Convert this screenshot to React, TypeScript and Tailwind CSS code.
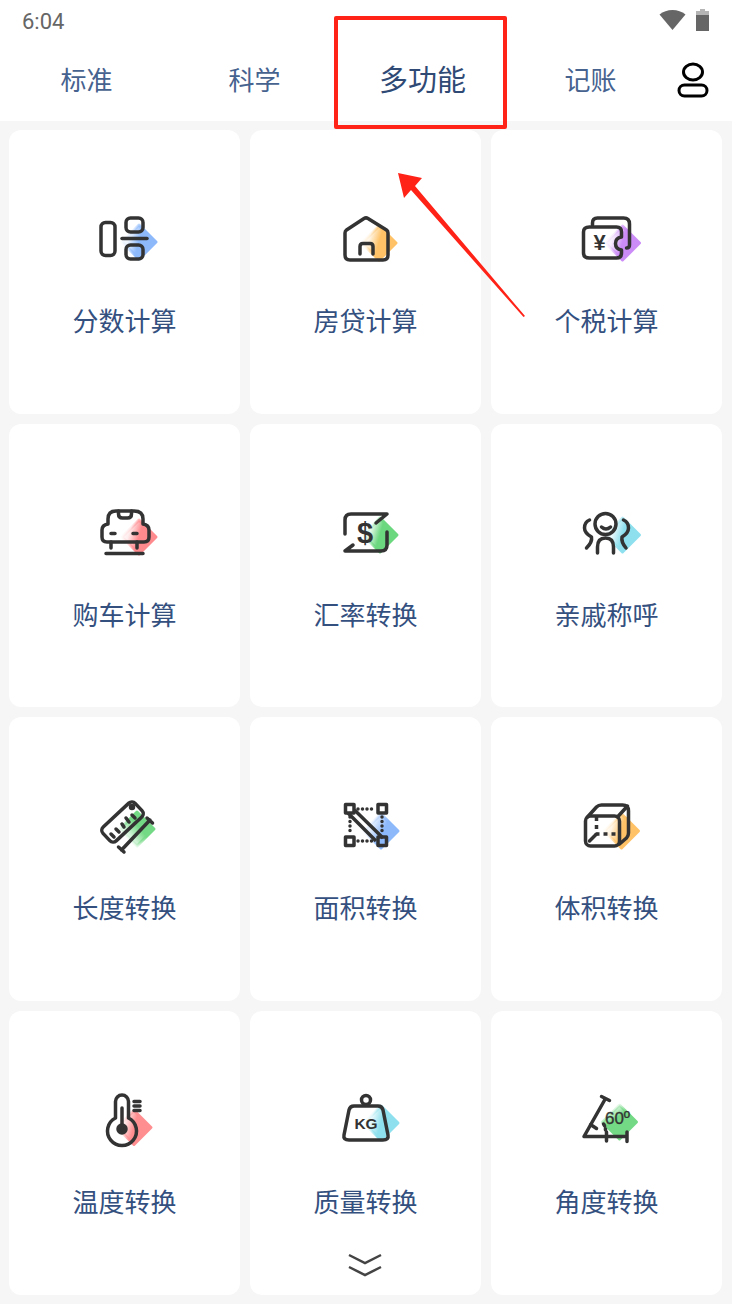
import { useId, type ReactNode } from 'react'

const INK = '#333333'

// colour fades in from the left side of the diamond, behind the line drawing
function Diamond({ cx, cy, color, from, to }: { cx: number; cy: number; color: string; from?: [number, number]; to?: [number, number] }) {
  const id = useId()
  const r = 17
  const start = from ?? [cx - 18, cy - 6]
  const end = to ?? [cx + 2, cy]
  return (
    <>
      <defs>
        <linearGradient id={id} gradientUnits="userSpaceOnUse" x1={start[0]} y1={start[1]} x2={end[0]} y2={end[1]}>
          <stop offset="0" stopColor={color} stopOpacity="0" />
          <stop offset="0.4" stopColor={color} stopOpacity="0.15" />
          <stop offset="0.9" stopColor={color} />
        </linearGradient>
      </defs>
      <polygon
        points={`${cx},${cy - r} ${cx + r},${cy} ${cx},${cy + r} ${cx - r},${cy}`}
        fill={`url(#${id})`}
        stroke={`url(#${id})`}
        strokeWidth="3"
        strokeLinejoin="round"
      />
    </>
  )
}

function Glyph({ dx = 5, dy = 0, children }: { dx?: number; dy?: number; children: ReactNode }) {
  return (
    <svg width="100" height="80" viewBox="0 0 100 80" className="block shrink-0">
      <g transform={`translate(${dx} ${dy})`} fill="none" stroke={INK} strokeWidth="3.5" strokeLinecap="round" strokeLinejoin="round">
        {children}
      </g>
    </svg>
  )
}

function IconText({ x, y, size, light = false, children }: { x: number; y: number; size: number; light?: boolean; children: ReactNode }) {
  return (
    <text
      x={x}
      y={y}
      fontSize={size}
      textAnchor="middle"
      fill={INK}
      stroke={light ? INK : 'none'}
      strokeWidth={light ? 0.3 : 0}
      className={light ? "font-['Liberation_Sans',sans-serif] font-normal" : "font-['Liberation_Sans',sans-serif] font-bold"}
    >
      {children}
    </text>
  )
}

const items = [
  {
    label: '分数计算',
    icon: (
      <Glyph>
        <Diamond cx={59} cy={42} color="#8db9fb" />
        <rect x="21" y="22.5" width="14" height="33" rx="4.5" />
        <rect x="46" y="18" width="17" height="14" rx="4.5" />
        <rect x="46" y="45" width="17" height="14" rx="4.5" />
        <path d="M42 38.500H67" />
      </Glyph>
    ),
  },
  {
    label: '房贷计算',
    icon: (
      <Glyph>
        <Diamond cx={58} cy={43} color="#ffc266" />
        <path d="M43 18.500 25.500 30q-1.500 1-1.500 3v22q0 5 5 5h33q5 0 5-5V33q0-2-1.500-3L47 18.500q-2-1.300-4 0z" />
        <path d="M39 54V46.500q0-3 3-3h7q3 0 3 3V54" />
      </Glyph>
    ),
  },
  {
    label: '个税计算',
    icon: (
      <Glyph dx={3.5}>
        <Diamond cx={62} cy={43} color="#cc8cf7" />
        <path d="M32 25v-2q0-5 5-5h26q6 0 6 6v21q0 3-3 3" />
        <path d="M29 27h27q5 0 5 5v5q-6 1-6 6.500t6 6.500v3q0 5-5 5H29q-6 0-6-5V32q0-5 6-5z" />
        <IconText x={39} y={50} size={22}>¥</IconText>
      </Glyph>
    ),
  },
  {
    label: '购车计算',
    icon: (
      <Glyph dy={1}>
        <Diamond cx={59} cy={42} color="#ff8a8e" />
        <path d="M28 29v-5q0-8 8-8h18q9 0 9 8v5q6 1 6 6v7q0 5-5 5H27q-5 0-5-5v-7q0-5 6-6z" />
        <path d="M38.500 16v3q0 4 4 4h5q4 0 4-4v-3" />
        <path d="M31 47v6M57 47v6M26 58.500h37M31 38.500h4M53 38.500h4" />
      </Glyph>
    ),
  },
  {
    label: '汇率转换',
    icon: (
      <Glyph dy={1}>
        <Diamond cx={59} cy={40} color="#6bd77f" />
        <path d="M24 39V25q0-6 6-6h36L55 28" />
        <path d="M66 37v13q0 6-6 6H24l8-6" />
        <IconText x={44} y={48} size={29}>$</IconText>
      </Glyph>
    ),
  },
  {
    label: '亲戚称呼',
    icon: (
      <Glyph dx={3.5} dy={1}>
        <Diamond cx={62} cy={40} color="#8ee0ee" />
        <circle cx="45" cy="29" r="10.500" />
        <path d="M41 32q4.500 4 9 0" />
        <path d="M37 58v-6q0-9 8-9t8 9v6" />
        <path d="M29 25q-5 2-5 8 0 5 7 9 1 5-5 11" />
        <path d="M63 25q5 2 5 8 0 5-6.500 9-1 5 4 11" />
      </Glyph>
    ),
  },
  {
    label: '长度转换',
    icon: (
      <Glyph dy={-2}>
        <Diamond cx={57} cy={44} color="#74d985" from={[32, 50]} to={[54, 32]} />
        <rect x="20.500" y="27.500" width="44" height="19" rx="4.500" transform="rotate(-43 42.500 37)" />
        <circle cx="52" cy="22" r="1.500" fill={INK} />
        <path d="M34 52l-3-3M39 47l-3-3M44 42l-2-3M49 37l-3-4M55 33l-3-3" />
        <path d="M41.500 65 70 35M38.500 62l5.500 5M67 33l5.500 5" />
      </Glyph>
    ),
  },
  {
    label: '面积转换',
    icon: (
      <Glyph dy={-2}>
        <Diamond cx={60} cy={46} color="#8db9fb" from={[40, 36]} to={[64, 48]} />
        <rect x="24.500" y="19.500" width="8.500" height="8.500" />
        <rect x="57" y="19.500" width="8.500" height="8.500" />
        <rect x="24.500" y="52" width="8.500" height="8.500" />
        <rect x="57" y="52" width="8.500" height="8.500" />
        <path d="M37 24h17M37 56h17M29 32v17M61 32v17" strokeDasharray="0 4.500" />
        <path d="M27 28l28 28M33.500 25 62 53" strokeLinecap="butt" />
      </Glyph>
    ),
  },
  {
    label: '体积转换',
    icon: (
      <Glyph dx={3.5} dy={-2}>
        <Diamond cx={61} cy={46} color="#ffc266" />
        <rect x="25" y="31" width="34" height="30" rx="5" />
        <path d="M27 32 36 22q2-2 5-2h21q6 0 6 6v22q0 3-2 5l-7 6" />
        <path d="M57 32 67 21" />
        <path d="M36 32v17h21" strokeDasharray="4 4" strokeLinecap="butt" />
        <path d="M36 49l-7 7" />
      </Glyph>
    ),
  },
  {
    label: '温度转换',
    icon: (
      <Glyph dy={-1}>
        <Diamond cx={54} cy={47.500} color="#ff8e90" />
        <path d="M35.500 38V21.500a6.500 6.500 0 0 1 13 0V38a14.500 14.500 0 1 1-13 0z" />
        <path d="M42 28v20" />
        <circle cx="42" cy="49" r="4" fill={INK} />
        <path d="M54 21.500h6M54 26h6M54 30.500h6" />
      </Glyph>
    ),
  },
  {
    label: '质量转换',
    icon: (
      <Glyph dy={-1}>
        <Diamond cx={60} cy={43} color="#8ee0ee" />
        <circle cx="45" cy="20" r="4.500" />
        <path d="M33 26h24q4 0 5 4l5 25q1 5-5 5H28q-6 0-5-5l5-25q1-4 5-4z" />
        <IconText x={45} y={49} size={15.500}>KG</IconText>
      </Glyph>
    ),
  },
  {
    label: '角度转换',
    icon: (
      <Glyph dx={3.5} dy={-1}>
        <Diamond cx={59} cy={42} color="#74d985" from={[48, 22]} to={[60, 38]} />
        <path d="M23.500 56.500h43M23.500 56.500 45 18.500M41 16.500l8 4M66.500 52v9.500M46 52v9M30 44.500l6 4" />
        <path d="M43 44q2 3 2 6" strokeDasharray="2 3" />
        <IconText x={57} y={44} size={17} light>60º</IconText>
      </Glyph>
    ),
  },
]

function Tab({ label, active = false }: { label: string; active?: boolean }) {
  return (
    <div className={`w-[168px] text-center ${active ? 'pb-[2px] text-[29px] text-[#2f4a75]' : 'pb-[4px] text-[26px] text-[#46628f]'}`}>
      {label}
    </div>
  )
}

export default function App() {
  return (
    <div className="relative h-[1304px] w-[732px] overflow-hidden bg-[#f6f6f6] font-['Noto_Sans_CJK_SC',sans-serif]">
      <header className="h-[121px] bg-white">
        <div className="flex h-[42px] items-center justify-between pl-[22px] pr-[23px]">
          <span className="font-['Roboto',sans-serif] text-[22px] text-[#666666]">6:04</span>
          <div className="-mt-[3px] flex items-center gap-[10px]">
            <svg width="27" height="20" viewBox="0 0 27 20">
              <path d="M13.500 20 0.500 4.500Q6 0 13.500 0T26.500 4.500z" fill="#666666" />
            </svg>
            <svg width="13" height="22" viewBox="0 0 13 22">
              <path d="M4 0h5v2H4z" fill="#b5b5b5" />
              <path d="M0 2h13v4H0z" fill="#b5b5b5" />
              <path d="M0 6h13v16H0z" fill="#666666" />
            </svg>
          </div>
        </div>
        <nav className="flex h-[76px] items-center pl-[2.5px]">
          <Tab label="标准" />
          <Tab label="科学" />
          <Tab label="多功能" active />
          <Tab label="记账" />
          <svg width="32" height="36" viewBox="0 0 32 36" className="ml-[2px]" fill="none" stroke="#000000" strokeWidth="3">
            <ellipse cx="16" cy="10" rx="9.500" ry="8" />
            <rect x="2" y="23" width="28" height="11" rx="5.500" />
          </svg>
        </nav>
      </header>

      <main className="grid grid-cols-3 gap-x-[10px] gap-y-[10px] pl-[9px] pr-[10px] pt-[9px] [grid-auto-rows:283.67px]">
        {items.map((item) => (
          <div key={item.label} className="relative flex flex-col items-center rounded-[12px] bg-white pt-[70px]">
            {item.icon}
            <p className="mt-[22px] text-[26px] leading-[36px] text-[#34507f]">{item.label}</p>
            {item.label === '质量转换' && (
              <svg width="36" height="26" viewBox="0 0 36 26" className="absolute bottom-[17px] left-[97px]" fill="none" stroke="#444444" strokeWidth="2.500">
                <path d="M2 3l16 8 16-8M2 15l16 8 16-8" />
              </svg>
            )}
          </div>
        ))}
      </main>

      <div className="absolute left-[334px] top-[16px] h-[113px] w-[173px] rounded-[2px] border-4 border-[#ff2217]" />
      <svg width="732" height="1304" viewBox="0 0 732 1304" className="pointer-events-none absolute left-0 top-0">
        <polygon points="398,173 422,178 415,186 525,316 523.500,317 411,190 404,198" fill="#ff2217" />
      </svg>
    </div>
  )
}
